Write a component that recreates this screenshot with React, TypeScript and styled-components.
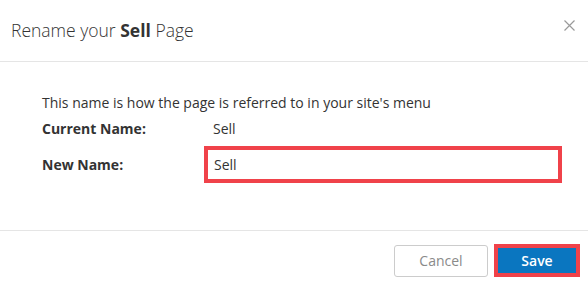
import React from "react";
import styled, { createGlobalStyle } from "styled-components";

const GlobalStyle = createGlobalStyle`
  html, body { margin: 0; padding: 0; background: #ffffff; }
  body { font-family: "Open Sans", "Liberation Sans", sans-serif; color: #333333; }
  * { box-sizing: border-box; }
`;

const Modal = styled.div`
  width: 588px;
  height: 289px;
  display: flex;
  flex-direction: column;
  background: #ffffff;
`;

const Header = styled.div`
  height: 62px;
  display: flex;
  justify-content: space-between;
  align-items: center;
  padding: 0 13px 0 11px;
  border-bottom: 1px solid #e5e5e5;
`;

const Title = styled.h1`
  margin: 0;
  font-size: 17.5px;
  line-height: 24px;
  font-weight: 300;
  color: #333333;
  padding-bottom: 1px;
`;

const Strong = styled.b`
  font-weight: 700;
`;

const CloseButton = styled.button`
  align-self: flex-start;
  margin-top: 20px;
  width: 11px;
  height: 11px;
  padding: 0;
  border: 0;
  background: transparent;
  display: flex;
  cursor: pointer;
`;

const Body = styled.div`
  height: 169px;
  padding: 31px 26px 0 42px;
  border-bottom: 1px solid #e5e5e5;
`;

const Description = styled.p`
  margin: 0 0 6px 0;
  font-size: 14px;
  line-height: 20px;
  color: #333333;
`;

const FieldGrid = styled.div`
  display: grid;
  grid-template-columns: 162px 358px;
  row-gap: 7px;
  align-items: center;
`;

const Label = styled.span`
  font-size: 14px;
  line-height: 20px;
  font-weight: 700;
  color: #333333;
`;

const Value = styled.span`
  font-size: 14px;
  line-height: 20px;
  color: #333333;
  padding-left: 9px;
`;

const NameInput = styled.input`
  width: 358px;
  height: 37px;
  border: 4px solid #f0424a;
  padding: 0 6px;
  font-family: "Open Sans", "Liberation Sans", sans-serif;
  font-size: 14px;
  color: #333333;
  outline: none;
  background: #ffffff;
`;

const Footer = styled.div`
  flex: 1;
  display: flex;
  justify-content: flex-end;
  align-items: flex-start;
  gap: 6px;
  padding: 13px 8px 0 0;
`;

const Button = styled.button<{ $primary?: boolean }>`
  font-family: "Open Sans", "Liberation Sans", sans-serif;
  font-size: 14px;
  line-height: 20px;
  cursor: pointer;
  ${(p) =>
    p.$primary
      ? `
    width: 86px;
    height: 33px;
    background: #0a76c0;
    color: #ffffff;
    font-weight: 600;
    border: 4px solid #f0424a;
    border-radius: 0;
  `
      : `
    margin-top: 1px;
    width: 94px;
    height: 32px;
    background: #ffffff;
    color: #8a8a8a;
    font-weight: 400;
    border: 1px solid #cccccc;
    border-radius: 3px;
  `}
`;

export default function App() {
  return (
    <>
      <GlobalStyle />
      <Modal>
        <Header>
          <Title>
            Rename your <Strong>Sell</Strong> Page
          </Title>
          <CloseButton aria-label="Close">
            <svg width="11" height="11" viewBox="0 0 11 11">
              <path d="M0.5 0.5 L10.5 10.5 M10.5 0.5 L0.5 10.5" stroke="#9a9a9a" strokeWidth="1.2" fill="none" />
            </svg>
          </CloseButton>
        </Header>
        <Body>
          <Description>This name is how the page is referred to in your site's menu</Description>
          <FieldGrid>
            <Label>Current Name:</Label>
            <Value>Sell</Value>
            <Label>New Name:</Label>
            <NameInput defaultValue="Sell" />
          </FieldGrid>
        </Body>
        <Footer>
          <Button>Cancel</Button>
          <Button $primary>Save</Button>
        </Footer>
      </Modal>
    </>
  );
}
